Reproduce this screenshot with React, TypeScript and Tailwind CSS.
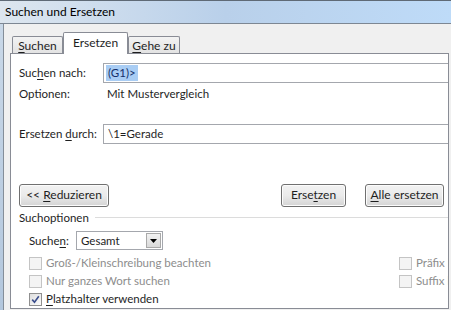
import React from "react";

const font = { fontFamily: "Lato, 'Liberation Sans', sans-serif" };

function Key({ children }: { children: React.ReactNode }) {
  return <span className="underline underline-offset-[2px] decoration-[1px]">{children}</span>;
}

function Tab({
  active,
  children,
  width,
}: {
  active?: boolean;
  children: React.ReactNode;
  width: string;
}) {
  if (active) {
    return (
      <div
        className={`${width} relative z-10 -mb-px flex h-[22px] items-center justify-center rounded-t-[2px] border border-b-0 border-[#898c95] bg-white pb-[1px] text-[12px]`}
      >
        {children}
      </div>
    );
  }
  return (
    <div
      className={`${width} flex h-[17px] items-center justify-center rounded-t-[2px] border border-b-0 border-[#898c95] bg-gradient-to-b from-[#f3f3f3] to-[#e3e3e3] pt-[2px] text-[12px]`}
    >
      {children}
    </div>
  );
}

function Button({ children, width }: { children: React.ReactNode; width: string }) {
  return (
    <div
      className={`${width} flex h-[23px] items-center justify-center rounded-[3px] border border-[#707070] bg-gradient-to-b from-[#f2f2f2] via-[#ebebeb] to-[#d4d4d4] text-[12px] shadow-[inset_0_0_0_1px_#fcfcfc]`}
    >
      {children}
    </div>
  );
}

function Checkbox({ checked, disabled }: { checked?: boolean; disabled?: boolean }) {
  return (
    <div
      className={`flex h-[13px] w-[13px] shrink-0 items-center justify-center border ${
        disabled
          ? "border-[#c4c4c4] bg-[#f4f4f4]"
          : "border-[#8f8f8f] bg-gradient-to-br from-[#dedede] to-[#fbfbfb]"
      }`}
    >
      {checked && (
        <svg width="9" height="9" viewBox="0 0 9 9">
          <path d="M1.2 4.6 L3.5 7.2 L7.8 1.2" fill="none" stroke="#3a4d8c" strokeWidth="1.6" />
        </svg>
      )}
    </div>
  );
}

function CheckRow({
  label,
  checked,
  disabled,
}: {
  label: React.ReactNode;
  checked?: boolean;
  disabled?: boolean;
}) {
  return (
    <div className="flex h-[18px] items-center gap-[4px]">
      <Checkbox checked={checked} disabled={disabled} />
      <span className={disabled ? "text-[#8d8d8d]" : "text-[#1e1e1e]"}>{label}</span>
    </div>
  );
}

export default function App() {
  return (
    <div
      className="flex h-[310px] w-[451px] flex-col overflow-hidden bg-[#f0f0f0] text-[11.5px] leading-none text-[#1e1e1e]"
      style={font}
    >
      {/* title bar */}
      <div className="flex h-[23px] shrink-0 items-center border-t border-[#5f6a76] bg-gradient-to-r from-[#dde6ef] via-[#b9d0ea] to-[#bedbf8] pl-[5px] text-[12px] text-[#000]">
        Suchen und Ersetzen
      </div>

      <div className="flex flex-1 border-t border-[#7d8793]">
        <div className="w-[3px] shrink-0 bg-gradient-to-b from-[#c9d8e8] to-[#b3c7dd]" />
        <div className="flex flex-1 flex-col border-l border-[#848e99] bg-[#f0f0f0] pl-[6px]">
          {/* tabs */}
          <div className="flex h-[29px] items-end pl-[2px]">
            <Tab width="w-[51px]">
              <span>
                <Key>S</Key>uchen
              </span>
            </Tab>
            <Tab active width="w-[65px]">
              Ersetzen
            </Tab>
            <Tab width="w-[52px]">
              <span>
                <Key>G</Key>ehe zu
              </span>
            </Tab>
          </div>

          {/* panel */}
          <div className="flex h-[256px] w-[439px] flex-col overflow-hidden whitespace-nowrap border border-[#898c95] bg-white">
            <div className="mt-[9px] flex h-[20px] items-center">
              <span className="w-[92px] shrink-0 pl-[8px]">
                Suc<Key>h</Key>en nach:
              </span>
              <div className="flex h-[20px] flex-1 items-center border border-r-0 border-[#a4a7ad] pl-[2px]">
                <span className="flex h-[16px] items-center bg-[#a9cdf4] px-[2px] text-[#14306a]">
                  (G1)&gt;
                </span>
              </div>
            </div>

            <div className="mt-[2px] flex h-[18px] items-center">
              <span className="w-[96px] shrink-0 pl-[8px]">Optionen:</span>
              <span>Mit Mustervergleich</span>
            </div>

            <div className="mt-[21px] flex h-[20px] items-center">
              <span className="w-[92px] shrink-0 pl-[8px]">
                Ersetzen <Key>d</Key>urch:
              </span>
              <div className="flex h-[20px] flex-1 items-center border border-r-0 border-[#a4a7ad] pl-[4px]">
                \1=Gerade
              </div>
            </div>

            <div className="mt-[40px] flex items-center pl-[8px] pr-[4px]">
              <Button width="w-[90px]">
                <span>
                  &lt;&lt; <Key>R</Key>eduzieren
                </span>
              </Button>
              <div className="ml-auto flex gap-[19px]">
                <Button width="w-[65px]">
                  <span>
                    Erse<Key>t</Key>zen
                  </span>
                </Button>
                <Button width="w-[79px]">
                  <span>
                    <Key>A</Key>lle ersetzen
                  </span>
                </Button>
              </div>
            </div>

            <div className="mt-[2px] flex h-[18px] items-center gap-[6px] pl-[8px]">
              <span>Suchoptionen</span>
              <div className="h-px flex-1 bg-[#dcdcdc]" />
            </div>

            <div className="mt-[5px] flex h-[19px] items-center pl-[18px]">
              <span className="w-[47px]">
                Suche<Key>n</Key>:
              </span>
              <div className="flex h-[19px] w-[87px] items-center border border-[#a4a7ad] bg-white">
                <span className="flex-1 pl-[4px]">Gesamt</span>
                <div className="mr-px flex h-[15px] w-[15px] items-center justify-center border border-[#a9a9a9] bg-gradient-to-b from-[#f2f2f2] to-[#d9d9d9]">
                  <svg width="7" height="4" viewBox="0 0 7 4">
                    <path d="M0 0 H7 L3.5 4 Z" fill="#000" />
                  </svg>
                </div>
              </div>
            </div>

            <div className="mt-[4px] flex">
              <div className="flex flex-col pl-[18px]">
                <CheckRow disabled label="Groß-/Kleinschreibung beachten" />
                <CheckRow disabled label="Nur ganzes Wort suchen" />
                <CheckRow
                  checked
                  label={
                    <span>
                      <Key>P</Key>latzhalter verwenden
                    </span>
                  }
                />
              </div>
              <div className="ml-auto flex w-[49px] flex-col overflow-hidden">
                <CheckRow disabled label="Präfix beachten" />
                <CheckRow disabled label="Suffix beachten" />
              </div>
            </div>
          </div>
        </div>
      </div>
    </div>
  );
}
